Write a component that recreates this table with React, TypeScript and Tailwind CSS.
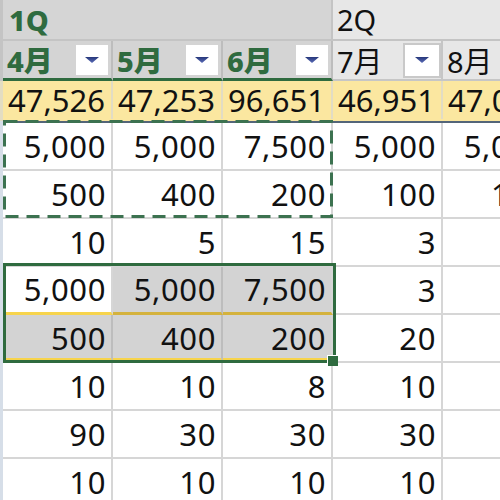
import React from "react";

function Tri() {
  return (
    <svg width="16" height="8" viewBox="0 0 16 8">
      <defs>
        <linearGradient id="tg" x1="0" y1="0" x2="0" y2="1">
          <stop offset="0" stopColor="#26377a" />
          <stop offset="1" stopColor="#5a6cb8" />
        </linearGradient>
      </defs>
      <polygon points="1,1 15,1 8,7" fill="url(#tg)" />
    </svg>
  );
}

function HeadCell({ label, sel }: { label: string; sel: boolean }) {
  return (
    <div
      className={
        sel
          ? "w-[110px] h-[40px] shrink-0 box-border flex items-center justify-between border-r-2 border-b-[3px] border-r-[#bdbdbd] border-b-[#2f6b3f] bg-[#d4d4d4] pl-[4px] pr-[1px]"
          : "w-[110px] h-[40px] shrink-0 box-border flex items-center justify-between border-r-2 border-b-2 border-r-[#c6c6c6] border-b-[#c6c6c6] bg-[#e7e7e7] pl-[4px] pr-[0px]"
      }
    >
      <span
        className={
          sel
            ? "text-[29px] leading-none font-extrabold text-[#2f6b3f] pt-[2px]"
            : "text-[29px] leading-none text-[#111] pt-[2px]"
        }
      >
        {label}
      </span>
      <div
        className={
          sel
            ? "w-[36px] h-[34px] box-border border-2 border-[#d4d4d4] bg-white flex items-center justify-center"
            : "w-[38px] h-[35px] box-border border-2 border-[#c9c9c9] bg-white flex items-center justify-center"
        }
      >
        <Tri />
      </div>
    </div>
  );
}

type Cell = { v: string; bg?: string; bb?: string; br?: string };

const rows: Cell[][] = [
  [{ v: "5,000" }, { v: "5,000" }, { v: "7,500" }, { v: "5,000" }, { v: "5,000" }],
  [{ v: "500" }, { v: "400" }, { v: "200" }, { v: "100" }, { v: "100" }],
  [{ v: "10" }, { v: "5" }, { v: "15" }, { v: "3" }, { v: "" }],
  [
    { v: "5,000", bb: "border-b-[#f7d44c]", br: "border-r-[#d6d6d6]" },
    { v: "5,000", bg: "bg-[#d3d3d3]", bb: "border-b-[#d4b23d]", br: "border-r-[#bdbdbd]" },
    { v: "7,500", bg: "bg-[#d3d3d3]", bb: "border-b-[#d4b23d]" },
    { v: "3" },
    { v: "" },
  ],
  [
    { v: "500", bg: "bg-[#d3d3d3]", bb: "border-b-[#f7d44c]", br: "border-r-[#bdbdbd]" },
    { v: "400", bg: "bg-[#d3d3d3]", bb: "border-b-[#f7d44c]", br: "border-r-[#bdbdbd]" },
    { v: "200", bg: "bg-[#d3d3d3]", bb: "border-b-[#f7d44c]" },
    { v: "20" },
    { v: "" },
  ],
  [{ v: "10" }, { v: "10" }, { v: "8" }, { v: "10" }, { v: "" }],
  [{ v: "90" }, { v: "30" }, { v: "30" }, { v: "30" }, { v: "" }],
  [{ v: "10" }, { v: "10" }, { v: "10" }, { v: "10" }, { v: "" }],
];

export default function App() {
  return (
    <div className="w-[500px] h-[500px] overflow-hidden bg-white relative flex font-['Noto_Sans','Noto_Sans_CJK_JP',sans-serif] text-[#111]">
      <div className="w-[3px] shrink-0 flex flex-col">
        <div className="h-[81px] bg-[#c4c4c4]" />
        <div className="h-[40px] bg-[#e3ddc2]" />
        <div className="flex-1 bg-[#d6dee8]" />
      </div>
      <div className="w-[550px] shrink-0 flex flex-col">
        {/* row 1 */}
        <div className="flex h-[41px] shrink-0">
          <div className="w-[330px] h-[41px] box-border border-r-2 border-b-2 border-[#c4c4c4] bg-[#d5d5d5] flex items-center pl-[6px]">
            <span className="text-[29px] leading-none font-extrabold text-[#2f6b3f]">1Q</span>
          </div>
          <div className="w-[220px] h-[41px] box-border border-b-2 border-[#c4c4c4] bg-[#e7e7e7] flex items-center pl-[4px]">
            <span className="text-[29px] leading-none text-[#111]">2Q</span>
          </div>
        </div>
        {/* row 2 */}
        <div className="flex h-[40px] shrink-0">
          <HeadCell label="4月" sel />
          <HeadCell label="5月" sel />
          <HeadCell label="6月" sel />
          <HeadCell label="7月" sel={false} />
          <HeadCell label="8月" sel={false} />
        </div>
        {/* totals */}
        <div className="flex h-[40px] shrink-0 bg-[#fbe7a0] border-b-2 border-[#536579] box-content">
          {["47,526", "47,253", "96,651", "46,951", "47,061"].map((v, i) => (
            <div
              key={i}
              className="w-[110px] h-[38px] shrink-0 box-border border-r-2 border-[#e2dcc4] flex items-center justify-end pr-[6px] text-[31px] leading-none"
            >
              {v}
            </div>
          ))}
        </div>
        {/* data */}
        {rows.map((r, ri) => (
          <div key={ri} className="flex h-[48px] shrink-0">
            {r.map((c, ci) => (
              <div
                key={ci}
                className={[
                  "w-[110px] h-[48px] shrink-0 box-border border-r-2 flex items-center justify-end pr-[5px] text-[31px] leading-none tracking-[0.6px]",
                  c.bb
                    ? (ri === 4 ? "border-b-[5px] pt-[3px] " : "border-b-[3px] ") + c.bb
                    : "border-b-2 border-b-[#d6d6d6]",
                  c.br ? c.br : "border-r-[#d6d6d6]",
                  c.bg ? c.bg : "bg-white",
                ].join(" ")}
              >
                {c.v}
              </div>
            ))}
          </div>
        ))}
      </div>

      {/* copy marquee */}
      <svg className="absolute left-0 top-0 pointer-events-none" width="500" height="500">
        <rect
          x="4.5"
          y="121.5"
          width="327"
          height="95"
          fill="none"
          stroke="#3c7250"
          strokeWidth="3"
          strokeDasharray="13 8"
        />
      </svg>

      {/* selection */}
      <div className="absolute left-[3px] top-[263px] w-[333px] h-[100px] box-border border-[3px] border-[#2f6b3f] pointer-events-none" />
      <div className="absolute left-[327px] top-[355px] w-[11px] h-[11px] bg-[#2f6b3f] border-l border-t border-white box-border" />
    </div>
  );
}
